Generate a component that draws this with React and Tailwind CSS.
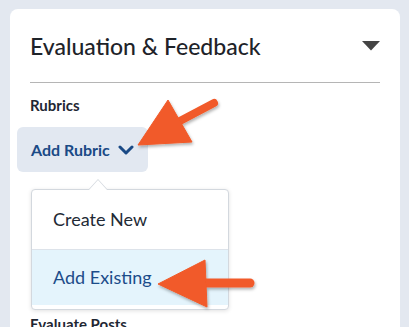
import React from "react";

const font = { fontFamily: "Lato, 'Open Sans', sans-serif" };

function Arrows() {
  // callout arrows drawn on top of the screenshot
  return (
    <svg
      className="pointer-events-none absolute left-0 top-0 z-20"
      width="409"
      height="327"
      viewBox="0 0 409 327"
    >
      <defs>
        <filter id="sh" x="-20%" y="-20%" width="140%" height="140%">
          <feDropShadow dx="1" dy="2" stdDeviation="1.5" floodColor="#000" floodOpacity="0.3" />
        </filter>
      </defs>
      <g fill="#f15a29" stroke="#f15a29" filter="url(#sh)">
        <line x1="214" y1="103" x2="178" y2="122" strokeWidth="8" strokeLinecap="round" />
        <polygon points="138,145 168,100 192,142" strokeWidth="1" strokeLinejoin="round" />
        <line x1="250" y1="283" x2="202" y2="283" strokeWidth="9" strokeLinecap="round" />
        <polygon points="158,284 205,260 207,307" strokeWidth="1" strokeLinejoin="round" />
      </g>
    </svg>
  );
}

export default function App() {
  return (
    <div
      className="relative h-[327px] w-[409px] overflow-hidden bg-[#e3e8f0]"
      style={font}
    >
      <div className="ml-[10px] mt-[9px] h-[340px] w-[390px] rounded-lg bg-white px-5">
        <div className="flex items-center justify-between pt-[21px] pb-[20px]">
          <h2 className="text-[23px] font-medium leading-[32px] text-[#1e2329]">
            Evaluation &amp; Feedback
          </h2>
          <svg width="18" height="10" viewBox="0 0 18 10">
            <polygon points="0,0 18,0 9,9.5" fill="#444" />
          </svg>
        </div>
        <div className="h-px bg-[#b5b5b5]" />
        <div className="pt-[12px] text-[15px] font-bold leading-5 text-[#1f2733]">
          Rubrics
        </div>
        <div className="relative mt-[12px]">
          <button className="-ml-[13px] flex h-[45px] items-center gap-[8px] rounded-md bg-[#e2e8f1] pl-[14px] pr-[14px] text-[16px] font-bold text-[#1a4a86]">
            <span>Add Rubric</span>
            <svg width="16" height="10" viewBox="0 0 16 10">
              <polyline
                points="2,2 8,8 14,2"
                fill="none"
                stroke="#1a4a86"
                strokeWidth="3"
                strokeLinecap="round"
                strokeLinejoin="round"
              />
            </svg>
          </button>
          <div className="absolute left-[1px] top-[62px] z-10 w-[198px] rounded-[4px] border border-[#d3d8de] bg-white pb-[4px] shadow-[0_1px_4px_rgba(0,0,0,0.12)]">
            <div className="absolute -top-[11px] left-[56px] h-0 w-0 border-x-[10px] border-b-[11px] border-x-transparent border-b-[#d3d8de]" />
            <div className="absolute -top-[10px] left-[57px] h-0 w-0 border-x-[9px] border-b-[10px] border-x-transparent border-b-white" />
            <div className="flex h-[60px] items-center border-b border-[#dde3ea] pl-[21px] text-[18px] text-[#222a35]">
              Create New
            </div>
            <div className="flex h-[55px] items-center bg-[#e4f4fc] pl-[21px] text-[18px] text-[#1c4c8a]">
              Add Existing
            </div>
          </div>
        </div>
        <div className="mt-[142px] text-[15px] font-bold leading-5 text-[#1f2733]">
          Evaluate Posts
        </div>
      </div>
      <Arrows />
    </div>
  );
}
